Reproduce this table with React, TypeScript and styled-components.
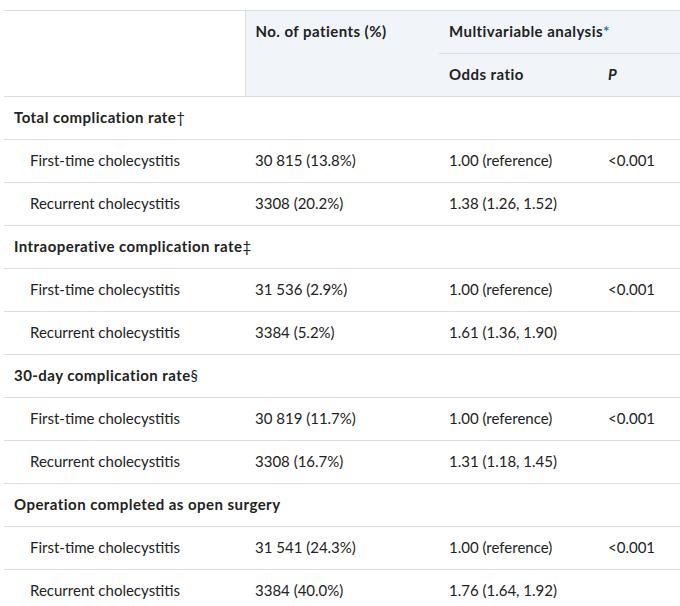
import React from 'react';
import styled, { createGlobalStyle } from 'styled-components';

const GlobalStyle = createGlobalStyle`
  html, body {
    margin: 0;
    padding: 0;
    background: #ffffff;
    overflow: hidden;
  }
  body {
    font-family: Lato, "Liberation Sans", sans-serif;
    color: #222222;
  }
`;

const Wrapper = styled.div`
  width: 680px;
  overflow: hidden;
  padding: 10px 0 0 4px;
`;

const Table = styled.table`
  width: 720px;
  table-layout: fixed;
  border-collapse: collapse;
  font-size: 15px;
  line-height: 21px;
`;

const HeadCell = styled.th<{ $shaded?: boolean; $divider?: boolean; $italic?: boolean }>`
  text-align: left;
  vertical-align: top;
  font-weight: 700;
  letter-spacing: 0.45px;
  font-style: ${(p) => (p.$italic ? 'italic' : 'normal')};
  padding: 10px 10px 11px;
  height: 21px;
  background: ${(p) => (p.$shaded ? '#f1f4f9' : '#ffffff')};
  border-top: 1px solid #d9dee7;
  border-right: ${(p) => (p.$divider ? '1px solid #d9dee7' : 'none')};
  border-bottom: 1px solid #d9dee7;
  white-space: nowrap;
`;

const Star = styled.span`
  color: #1a7cc4;
`;

const Mark = styled.span`
  font-weight: 400;
  letter-spacing: 0;
`;

const Cell = styled.td<{ $indent?: boolean; $group?: boolean }>`
  padding: 10px 10px 11px ${(p) => (p.$indent ? '26px' : '10px')};
  height: 21px;
  font-weight: ${(p) => (p.$group ? 700 : 400)};
  letter-spacing: ${(p) => (p.$group ? '0.45px' : '0')};
  border-bottom: 1px solid #d9dee7;
  white-space: nowrap;
`;

type Row = { label: string; n: string; or: string; p?: string };
type Group = { title: string; mark: string; rows: Row[] };

const groups: Group[] = [
  {
    title: 'Total complication rate',
    mark: '†',
    rows: [
      { label: 'First-time cholecystitis', n: '30 815 (13.8%)', or: '1.00 (reference)', p: '<0.001' },
      { label: 'Recurrent cholecystitis', n: '3308 (20.2%)', or: '1.38 (1.26, 1.52)' },
    ],
  },
  {
    title: 'Intraoperative complication rate',
    mark: '‡',
    rows: [
      { label: 'First-time cholecystitis', n: '31 536 (2.9%)', or: '1.00 (reference)', p: '<0.001' },
      { label: 'Recurrent cholecystitis', n: '3384 (5.2%)', or: '1.61 (1.36, 1.90)' },
    ],
  },
  {
    title: '30-day complication rate',
    mark: '§',
    rows: [
      { label: 'First-time cholecystitis', n: '30 819 (11.7%)', or: '1.00 (reference)', p: '<0.001' },
      { label: 'Recurrent cholecystitis', n: '3308 (16.7%)', or: '1.31 (1.18, 1.45)' },
    ],
  },
  {
    title: 'Operation completed as open surgery',
    mark: '',
    rows: [
      { label: 'First-time cholecystitis', n: '31 541 (24.3%)', or: '1.00 (reference)', p: '<0.001' },
      { label: 'Recurrent cholecystitis', n: '3384 (40.0%)', or: '1.76 (1.64, 1.92)' },
    ],
  },
];

export default function App() {
  return (
    <Wrapper>
      <GlobalStyle />
      <Table>
        <colgroup>
          <col style={{ width: 241 }} />
          <col style={{ width: 194 }} />
          <col style={{ width: 159 }} />
          <col />
        </colgroup>
        <thead>
          <tr>
            <HeadCell rowSpan={2} $divider />
            <HeadCell rowSpan={2} $shaded>
              No. of patients (%)
            </HeadCell>
            <HeadCell colSpan={2} $shaded>
              Multivariable analysis<Star>*</Star>
            </HeadCell>
          </tr>
          <tr>
            <HeadCell $shaded>Odds ratio</HeadCell>
            <HeadCell $shaded $italic>
              P
            </HeadCell>
          </tr>
        </thead>
        <tbody>
          {groups.map((g) => (
            <React.Fragment key={g.title}>
              <tr>
                <Cell $group>
                  {g.title}
                  <Mark>{g.mark}</Mark>
                </Cell>
                <Cell />
                <Cell />
                <Cell />
              </tr>
              {g.rows.map((r) => (
                <tr key={g.title + r.label}>
                  <Cell $indent>{r.label}</Cell>
                  <Cell>{r.n}</Cell>
                  <Cell>{r.or}</Cell>
                  <Cell>{r.p}</Cell>
                </tr>
              ))}
            </React.Fragment>
          ))}
        </tbody>
      </Table>
    </Wrapper>
  );
}
